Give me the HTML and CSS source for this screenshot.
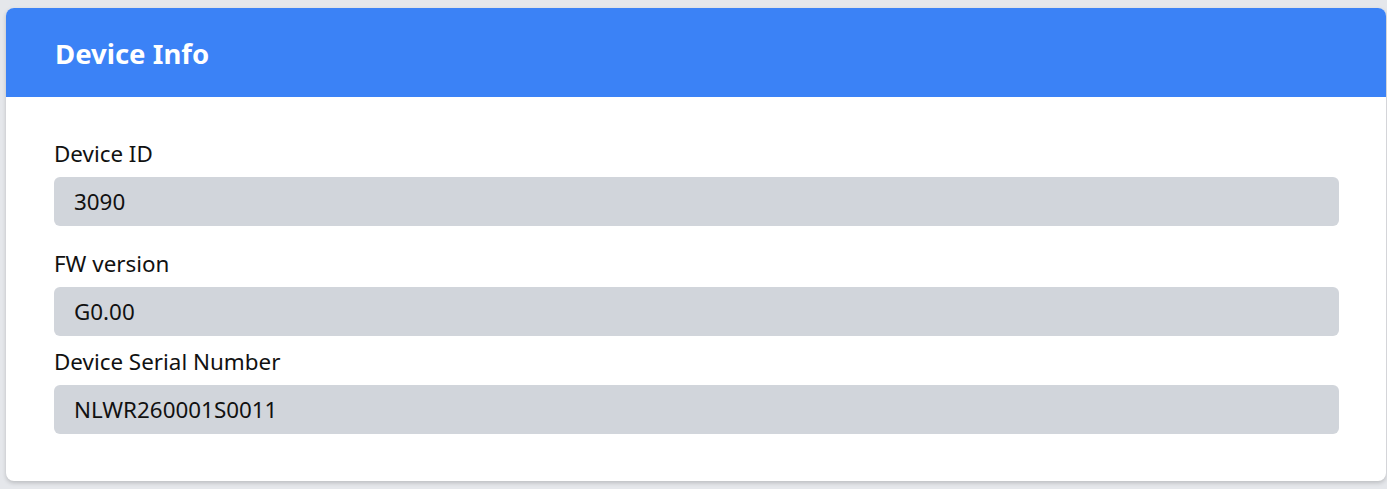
FILE: index.html
```html
<!DOCTYPE html>
<html>
<head>
<meta charset="utf-8">
<link rel="stylesheet" href="styles.css">
</head>
<body>
<div class="card">
  <div class="card-header"><h2 class="title">Device Info</h2></div>
  <div class="card-body">
    <div class="field field-a">
      <label class="label">Device ID</label>
      <div class="input">3090</div>
    </div>
    <div class="field field-b">
      <label class="label">FW version</label>
      <div class="input">G0.00</div>
    </div>
    <div class="field">
      <label class="label">Device Serial Number</label>
      <div class="input">NLWR260001S0011</div>
    </div>
  </div>
</div>
</body>
</html>
```
FILE: styles.css
```css
html, body { margin: 0; padding: 0; }
body {
  background: #e5e7eb;
  font-family: "Noto Sans", "Open Sans", sans-serif;
  color: #111;
  padding: 8px 1px 0 6px;
  height: 489px;
  box-sizing: border-box;
}
.card {
  background: #fff;
  border-radius: 8px;
  box-shadow: 0 2px 4px rgba(0,0,0,0.18);
  overflow: hidden;
  height: 473px;
}
.card-header {
  background: #3b82f6;
  height: 89px;
  display: flex;
  align-items: center;
  padding: 2px 48px 0 49px;
  box-sizing: border-box;
}
.title {
  margin: 0;
  color: #fff;
  font-size: 27.5px;
  font-weight: 700;
  line-height: 1;
}
.card-body {
  padding: 42px 47px 0 48px;
  display: flex;
  flex-direction: column;
}
.field { display: flex; flex-direction: column; gap: 8px; }
.field-a { margin-bottom: 23px; }
.field-b { margin-bottom: 11px; }
.label { font-size: 22.4px; line-height: 30px; }
.input {
  background: #d1d5db;
  border-radius: 6px;
  height: 49px;
  display: flex;
  align-items: center;
  padding: 0 20px;
  font-size: 22.4px;
}
```
